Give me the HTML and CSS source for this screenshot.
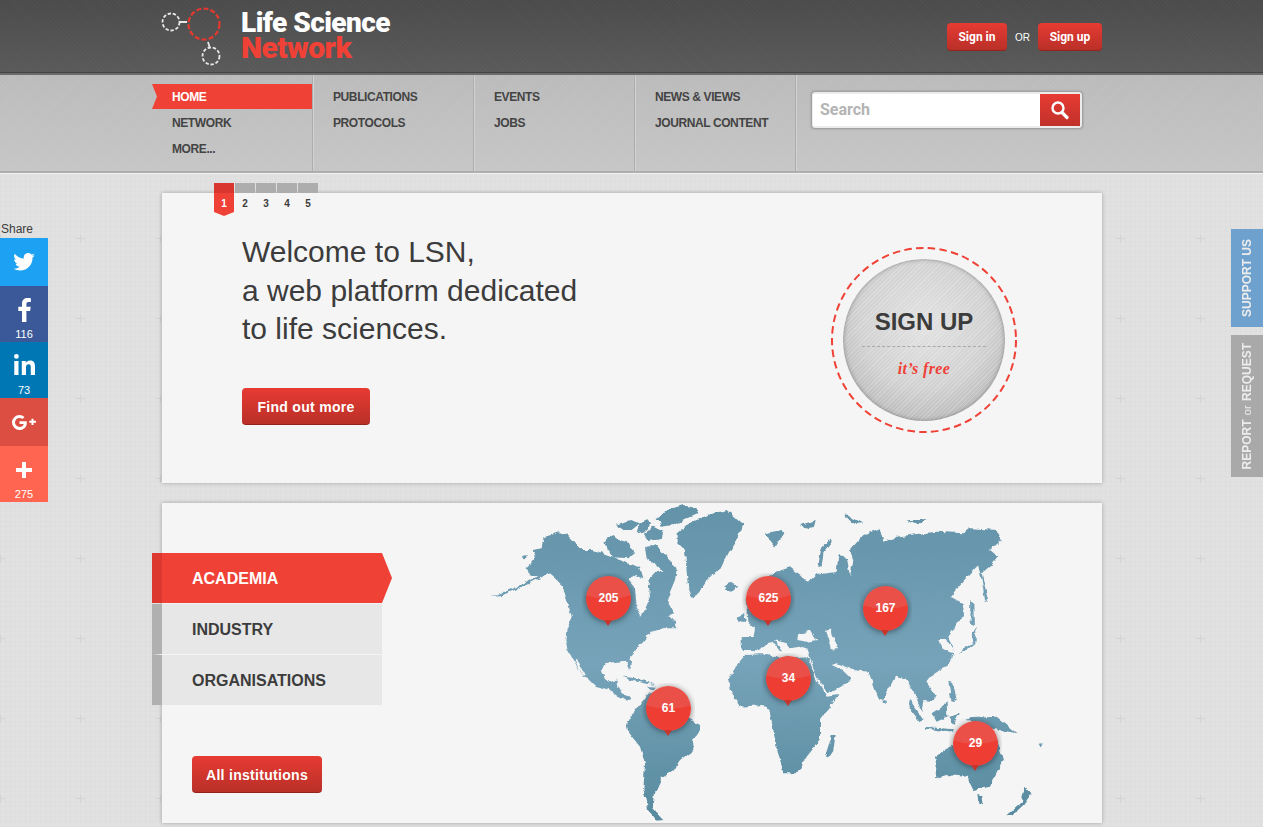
FILE: index.html
```html
<!DOCTYPE html>
<html lang="en">
<head>
    <meta charset="UTF-8">
    <meta name="viewport" content="width=device-width, initial-scale=1.0">
    <title>Life Science Network</title>
    <link rel="stylesheet" href="styles.css">
</head>
<body>

<header class="top-bar">
    <div class="wrap top-inner">
        <a class="logo" href="#">
            <svg class="logo-mark" width="66" height="62" viewBox="0 0 66 62" fill="none" stroke-linecap="butt">
                <circle cx="13" cy="17" r="8.5" stroke="#e8e8e8" stroke-width="1.8" stroke-dasharray="3.4 1.8"/>
                <path d="M22 17h7M50 37l1.500 5" stroke="#e8e8e8" stroke-width="1.800"/>
                <circle cx="46" cy="19" r="15.500" stroke="#e5392f" stroke-width="2.200" stroke-dasharray="5 2.200"/>
                <circle cx="53" cy="51" r="8.500" stroke="#e8e8e8" stroke-width="1.800" stroke-dasharray="3.400 1.800"/>
            </svg>
            <span class="logo-text">
                <span class="logo-life">Life Science</span>
                <span class="logo-network">Network</span>
            </span>
        </a>
        <div class="account">
            <a class="btn btn-small" href="#">Sign in</a>
            <span class="or">OR</span>
            <a class="btn btn-small btn-up" href="#">Sign up</a>
        </div>
    </div>
</header>

<nav class="main-nav">
    <div class="wrap nav-inner">
        <ul class="nav-col">
            <li class="current"><a href="#">Home</a></li>
            <li><a href="#">Network</a></li>
            <li><a href="#">More...</a></li>
        </ul>
        <ul class="nav-col">
            <li><a href="#">Publications</a></li>
            <li><a href="#">Protocols</a></li>
        </ul>
        <ul class="nav-col">
            <li><a href="#">Events</a></li>
            <li><a href="#">Jobs</a></li>
        </ul>
        <ul class="nav-col">
            <li><a href="#">News &amp; Views</a></li>
            <li><a href="#">Journal Content</a></li>
        </ul>
        <form class="search">
            <input class="search-input" type="text" placeholder="Search">
            <button class="search-btn" type="button" aria-label="Search">
                <svg width="20" height="20" viewBox="0 0 20 20" fill="none" stroke="#fff">
                    <circle cx="8" cy="8" r="5.500" stroke-width="2.400"/>
                    <path d="M12 12.500l5 5" stroke-width="3.200" stroke-linecap="round"/>
                </svg>
            </button>
        </form>
    </div>
</nav>

<aside class="share">
    <div class="share-title">Share</div>
    <a class="share-item tw" href="#">
        <svg width="22" height="18" viewBox="0 0 24 20"><path fill="#fff" d="M24 2.400c-.9.400-1.800.700-2.800.800 1-.6 1.800-1.600 2.200-2.700-1 .6-2 1-3.100 1.200A4.900 4.900 0 0 0 11.900 6.200C7.800 6 4.200 4 1.700.9c-1.300 2.200-.7 5.100 1.500 6.600-.8 0-1.600-.2-2.200-.6 0 2.400 1.700 4.400 3.900 4.900-.7.200-1.500.2-2.200.1.600 2 2.400 3.400 4.600 3.400A9.900 9.900 0 0 1 0 17.300 14 14 0 0 0 7.500 19.500c9.100 0 14.300-7.700 14-14.600 1-.7 1.800-1.500 2.500-2.500z"/></svg>
    </a>
    <a class="share-item fb has-count" href="#">
        <svg width="13" height="24" viewBox="0 0 13 24"><path fill="#fff" d="M8.400 24V13h3.700l.6-4.300H8.400V6c0-1.300.4-2.100 2.200-2.100h2.300V.2C12.500.1 11.100 0 9.600 0 6.300 0 4 2 4 5.700v3H.3V13H4v11z"/></svg>
        <span class="count">116</span>
    </a>
    <a class="share-item in has-count" href="#">
        <svg width="21" height="21" viewBox="0 0 21 21"><path fill="#fff" d="M.3 7h4.200v14H.3zM2.400 0a2.400 2.400 0 1 1 0 4.800 2.400 2.400 0 0 1 0-4.800zM7.800 7h4v1.900c.7-1.200 2.200-2.300 4.300-2.300 4 0 4.900 2.600 4.900 6.100V21h-4.200v-7.300c0-1.700-.1-3.500-2.200-3.500s-2.600 1.600-2.600 3.400V21H7.800z"/></svg>
        <span class="count">73</span>
    </a>
    <a class="share-item gp" href="#">
        <svg width="24" height="15" viewBox="0 0 24 15"><path fill="#fff" d="M7.500 6.200v2.700h4.200c-.4 1.800-1.900 3-4.200 3a4.500 4.500 0 0 1 0-9c1.200 0 2.200.4 3 1.100l2-2A7.200 7.200 0 0 0 7.500 0a7.500 7.500 0 0 0 0 15c4.300 0 7.300-3 7.300-7.300 0-.5-.1-1-.2-1.500zM21.500 5.800V3.700h-2v2.100h-2.200v2h2.200V10h2V7.800H24v-2z"/></svg>
    </a>
    <a class="share-item plus has-count" href="#">
        <svg width="16" height="16" viewBox="0 0 16 16"><path fill="#fff" d="M6 0h4v6h6v4h-6v6H6v-6H0V6h6z"/></svg>
        <span class="count">275</span>
    </a>
</aside>

<aside class="side-tabs">
    <a class="side-tab support" href="#"><span>SUPPORT US</span></a>
    <a class="side-tab report" href="#"><span>REPORT <small>or</small> REQUEST</span></a>
</aside>

<main class="wrap page">
    <section class="card hero">
        <ol class="slides">
            <li class="active">1</li>
            <li>2</li>
            <li>3</li>
            <li>4</li>
            <li>5</li>
        </ol>
        <div class="hero-copy">
            <h1>Welcome to LSN,<br>a web platform dedicated<br>to life sciences.</h1>
            <a class="btn btn-big" href="#">Find out more</a>
        </div>
        <a class="signup-badge" href="#">
            <svg class="badge-ring" width="188" height="188" viewBox="0 0 188 188" fill="none">
                <circle cx="94" cy="94" r="92" stroke="#ef4136" stroke-width="2" stroke-dasharray="7.500 4.300"/>
            </svg>
            <span class="badge-disc">
                <span class="badge-title">SIGN UP</span>
                <span class="badge-free">it’s free</span>
            </span>
        </a>
    </section>

    <section class="card network">
        <div class="sectors">
            <ul class="sector-list">
                <li class="active"><a href="#">ACADEMIA</a></li>
                <li><a href="#">INDUSTRY</a></li>
                <li><a href="#">ORGANISATIONS</a></li>
            </ul>
            <a class="btn btn-big" href="#">All institutions</a>
        </div>
        <div class="world">
            <svg class="world-map" width="580" height="320" viewBox="480 503 580 320">
                <defs>
                    <linearGradient id="land" gradientUnits="userSpaceOnUse" x1="0" y1="10" x2="0" y2="970">
                        <stop offset="0" stop-color="#6393a9"/>
                        <stop offset="0.5" stop-color="#76a3b9"/>
                        <stop offset="1" stop-color="#578a9e"/>
                    </linearGradient>
                    <!-- roughens the straight edges into a coastline -->
                    <filter id="coast" x="-2%" y="-2%" width="104%" height="104%">
                        <feTurbulence type="fractalNoise" baseFrequency="0.14" numOctaves="3" seed="4" result="n"/>
                        <feDisplacementMap in="SourceGraphic" in2="n" scale="5" xChannelSelector="R" yChannelSelector="G"/>
                    </filter>
                </defs>
                <g filter="url(#coast)">
                <!-- americas + greenland -->
                <g transform="translate(480 500) scale(.33333)" fill="url(#land)">
                    <polygon points="35,288 70,284 110,268 150,250 185,232 205,218 225,235 245,255 262,300 275,350 260,385 256,420 262,450 282,482 305,525 325,535 345,555 370,565 395,575 415,590 440,602 452,596 445,588 425,580 415,560 412,535 395,545 375,535 365,510 375,490 410,485 440,482 450,510 455,495 450,470 490,425 515,395 545,385 592,385 585,360 555,350 582,340 560,300 585,240 560,215 530,215 505,240 510,290 495,325 480,348 470,320 465,265 445,240 465,225 490,235 480,200 440,190 400,170 370,160 340,150 305,150 262,105 240,97 190,112 185,145 158,150 165,175 140,205 150,225 175,225 135,250 90,270"/>
                    <polygon points="370,125 400,105 420,120 450,130 465,160 445,175 400,172 385,150"/>
                    <polygon points="410,75 450,60 480,70 455,90 430,90"/>
                    <polygon points="490,100 520,80 550,95 545,115 505,120"/>
                    <polygon points="530,55 560,30 610,15 650,25 655,40 610,60 580,75 545,80"/>
                    <polygon points="495,145 530,135 555,165 590,205 585,240 560,225 530,195 500,175"/>
                    <polygon points="470,100 478,75 505,60 510,75 490,95"/>
                    <polygon points="590,100 620,75 680,45 740,30 790,75 770,120 745,160 730,195 680,240 650,285 640,298 625,265 620,215 615,150 590,125"/>
                    <polygon points="730,255 755,248 772,258 760,272 738,270"/>
                    <polygon points="440,675 450,650 490,600 510,575 540,590 600,640 660,675 660,690 640,720 640,750 600,780 580,810 545,835 525,880 520,925 552,960 530,962 505,930 490,870 495,790 480,740 445,695"/>
                    <polygon points="430,530 470,535 525,555 490,550 450,540"/>
                    <polygon points="505,558 530,560 525,568 508,566"/>
                    <polygon points="130,168 140,165 138,178 130,176"/>
                    <polygon points="552,342 575,352 570,365 552,358"/>
                    <polygon points="283,478 292,478 314,522 306,526" fill="#f5f5f5"/>
                </g>
                <!-- eurasia + africa + oceania -->
                <g transform="translate(740 500) scale(.33333)" fill="url(#land)">
                    <polygon points="5,450 5,415 40,410 45,385 25,365 20,300 60,250 110,215 150,202 190,235 205,250 230,225 290,215 295,165 320,170 330,230 340,180 330,150 370,105 420,85 430,125 470,110 550,100 590,95 670,100 690,85 770,90 785,120 750,150 775,170 760,190 725,220 745,305 735,300 725,240 715,195 640,275 632,290 668,310 672,345 640,390 625,410 640,450 620,420 595,420 610,450 640,460 620,500 600,510 570,530 558,545 590,590 575,602 550,600 545,640 530,590 500,540 465,530 430,600 415,595 395,540 385,515 340,510 290,490 275,495 310,510 335,535 320,550 262,580 230,530 212,480 205,450 175,440 150,445 140,430 105,420 130,455 118,452 100,425 80,430 60,450"/>
                    <polygon points="-35,540 -10,495 20,460 60,450 100,470 140,470 205,470 225,530 260,590 295,585 240,660 240,720 200,770 170,820 130,820 110,740 90,640 70,615 0,620 -25,580"/>
                    <polygon points="255,770 275,705 287,705 280,750 265,772"/>
                    <polygon points="585,770 620,745 640,735 680,670 720,660 750,680 770,720 790,780 750,860 700,870 680,830 620,825 585,835 590,800"/>
                    <polygon points="712,885 730,890 725,908 715,905"/>
                    <polygon points="800,945 845,905 855,860 875,880 850,915 815,948"/>
                    <polygon points="232,195 240,150 270,118 274,128 250,160 245,200"/>
                    <polygon points="690,300 700,310 702,375 692,370"/>
                    <polygon points="660,465 672,440 700,430 695,400 710,378 706,430 680,450"/>
                    <polygon points="510,600 550,660 540,665 505,620"/>
                    <polygon points="555,680 640,688 640,695 555,686"/>
                    <polygon points="575,640 620,610 622,650 590,665"/>
                    <polygon points="625,650 660,640 640,672"/>
                    <polygon points="625,545 640,550 650,600 635,605"/>
                    <polygon points="680,655 770,650 830,700 780,690 720,680"/>
                    <polygon points="430,600 440,602 440,612 432,612"/>
                    <polygon points="75,100 125,90 130,100 105,140 90,120"/>
                    <polygon points="180,75 230,60 225,80 190,88"/>
                    <polygon points="315,40 340,55 370,70 345,72 320,55"/>
                    <polygon points="500,60 560,60 530,75"/>
                    <polygon points="-10,350 15,340 20,365 -5,365"/>
                    <polygon points="895,735 912,730 905,742"/>
                    <polygon points="-3,70 10,72 5,85"/>
                    <!-- seas -->
                    <g fill="#f5f5f5">
                        <polygon points="175,402 205,395 235,420 200,425 172,420"/>
                        <polygon points="258,392 272,388 285,420 295,448 275,448 268,420"/>
                        <polygon points="10,458 60,452 100,445 130,455 170,468 205,462 205,470 170,475 130,465 95,462 60,463 20,465"/>
                    </g>
                </g>
                </g>
            </svg>
            <a class="pin pin-205" href="#"><span>205</span></a>
            <a class="pin pin-625" href="#"><span>625</span></a>
            <a class="pin pin-167" href="#"><span>167</span></a>
            <a class="pin pin-34" href="#"><span>34</span></a>
            <a class="pin pin-61" href="#"><span>61</span></a>
            <a class="pin pin-29" href="#"><span>29</span></a>
        </div>
    </section>
</main>

</body>
</html>
```

FILE: styles.css
```css
* {
    margin: 0;
    padding: 0;
    box-sizing: border-box;
}

html, body {
    height: 827px;
    overflow: hidden;
}

body {
    font-family: "Liberation Sans", Arial, sans-serif;
    color: #3c3c3c;
    background-color: #e1e1e1;
    background-image:
        url("data:image/svg+xml,%3Csvg xmlns='http://www.w3.org/2000/svg' width='80' height='80'%3E%3Cpath d='M36.500 40.500h8M40.500 36.500v8' stroke='%23d2d2d2' fill='none'/%3E%3C/svg%3E"),
        repeating-linear-gradient(90deg, rgba(0,0,0,.012) 0 1px, transparent 1px 5px),
        repeating-linear-gradient(0deg, rgba(0,0,0,.012) 0 1px, transparent 1px 5px);
    background-position: 40px 38px, 0 0, 0 0;
}

a {
    text-decoration: none;
    color: inherit;
}

ul, ol {
    list-style: none;
}

.wrap {
    width: 960px;
    margin-left: 152px;
}

/* top bar */
.top-bar {
    height: 75px;
    background-color: #515151;
    background-image:
        repeating-linear-gradient(45deg, rgba(255,255,255,.02) 0 1px, transparent 1px 3px),
        linear-gradient(#4b4b4b, #5a5a5a);
    border-bottom: 2px solid #6b6b6b;
    box-shadow: inset 0 -1px 0 #444;
}

.top-inner {
    display: flex;
    justify-content: space-between;
    height: 73px;
}

.logo {
    display: flex;
    margin-left: 2px;
}

.logo-mark {
    margin: 5px 17px 0 4px;
}

.logo-text {
    display: flex;
    flex-direction: column;
    padding-top: 10px;
    font-family: Roboto, "Liberation Sans", sans-serif;
    font-weight: 900;
    font-size: 28px;
    line-height: 25px;
}

.logo-life {
    color: #fff;
    letter-spacing: -.55px;
}

.logo-network {
    color: #ef4136;
    font-size: 30px;
    letter-spacing: -.55px;
}

.account {
    display: flex;
    align-items: center;
    height: 28px;
    margin: 23px 10px 0 0;
}

.btn {
    display: inline-block;
    color: #fff;
    font-weight: bold;
    text-align: center;
    background: linear-gradient(#e73b33, #b93028);
    border-radius: 4px;
    border-bottom: 1px solid #962319;
}

.btn-small {
    width: 60px;
    height: 28px;
    font-family: Roboto, "Liberation Sans", sans-serif;
    font-size: 12px;
    line-height: 28px;
}

.btn-up {
    width: 64px;
}

.or {
    width: 31px;
    text-align: center;
    font-size: 10px;
    color: #fff;
}

.btn-big {
    height: 37px;
    padding-top: 1px;
    font-size: 14px;
    line-height: 37px;
    letter-spacing: .3px;
}

/* navigation */
.main-nav {
    height: 98px;
    background-color: #c1c1c1;
    background-image:
        repeating-linear-gradient(135deg, rgba(255,255,255,.04) 0 1px, transparent 1px 3px),
        linear-gradient(#bbb, #c6c6c6);
    border-bottom: 2px solid #aeaeae;
    box-shadow: 0 1px 0 #f2f2f2;
}

.nav-inner {
    display: flex;
    height: 96px;
}

.nav-col {
    width: 161px;
    padding-top: 9px;
    border-right: 1px solid #adadad;
    box-shadow: 1px 0 0 #d2d2d2;
}

.nav-col li {
    height: 26px;
    padding-left: 20px;
    font-size: 12px;
    font-weight: bold;
    line-height: 26px;
    letter-spacing: -.4px;
    text-transform: uppercase;
    color: #444;
}

.nav-col li.current {
    height: 25px;
    color: #fff;
    background: #ef4136;
    clip-path: polygon(0 0, 100% 0, 100% 100%, 0 100%, 5px 50%);
    margin-bottom: 1px;
}

.search {
    display: flex;
    width: 272px;
    height: 38px;
    margin: 16px 0 0 15px;
    padding: 2px 2px 2px 1px;
    background: #ececec;
    border: 1px solid #a2a2a2;
    border-radius: 4px;
    box-shadow: 0 0 2px rgba(0,0,0,.25);
}

.search-input {
    flex: 1;
    min-width: 0;
    padding: 0 0 2px 7px;
    border: none;
    outline: none;
    background: #fff;
    font-family: Roboto, "Liberation Sans", sans-serif;
    font-size: 16px;
    font-weight: bold;
}

.search-input::placeholder {
    color: #b4b4b4;
    opacity: 1;
}

.search-btn {
    display: flex;
    align-items: center;
    justify-content: center;
    width: 40px;
    border: none;
    background: linear-gradient(#e73b33, #c0312a);
}

/* left share bar */
.share {
    position: absolute;
    left: 0;
    top: 222px;
    width: 48px;
}

.share-title {
    height: 16px;
    font-size: 12px;
    line-height: 14px;
    padding-left: 1px;
}

.share-item {
    display: flex;
    flex-direction: column;
    align-items: center;
    justify-content: center;
    height: 48px;
    color: #fff;
}

.share-item.has-count {
    height: 56px;
    justify-content: flex-start;
    padding-top: 12px;
    position: relative;
}

.count {
    position: absolute;
    bottom: 1px;
    left: 0;
    right: 0;
    text-align: center;
    font-size: 11px;
    line-height: 13px;
}

.tw { background: #1da1f2; }
.fb { background: #3b5998; }
.in { background: #0077b5; }
.gp { background: #dc4e41; }
.plus { background: #ff6550; }

.plus.has-count { padding-top: 16px; }

/* right side tabs */
.side-tabs {
    position: absolute;
    right: 0;
    top: 229px;
    width: 32px;
}

.side-tab {
    display: flex;
    align-items: center;
    justify-content: center;
    color: #ececec;
    font-size: 12px;
    font-weight: bold;
}

.side-tab span {
    writing-mode: vertical-rl;
    transform: rotate(180deg);
}

.side-tab small {
    font-size: 11px;
    font-weight: normal;
}

.support {
    height: 98px;
    background: #6fa1ce;
    margin-bottom: 8px;
}

.report {
    height: 142px;
    background: #a9a9a9;
    word-spacing: 1px;
}

/* cards */
.page {
    padding: 20px 10px 0;
}

.card {
    position: relative;
    background: #f5f5f5;
    box-shadow: 0 0 4px rgba(0,0,0,.28);
}

.hero {
    display: flex;
    justify-content: space-between;
    height: 290px;
    margin-bottom: 20px;
}

.slides {
    position: absolute;
    top: -10px;
    left: 52px;
    display: flex;
    gap: 1px;
}

.slides li {
    width: 20px;
    height: 33px;
    padding-top: 14px;
    text-align: center;
    font-size: 10px;
    font-weight: bold;
    line-height: 13px;
    background: linear-gradient(#adadad 10px, transparent 10px);
}

.slides li.active {
    color: #fff;
    background: linear-gradient(#d8362e 10px, #ef4136 10px);
    clip-path: polygon(0 0, 100% 0, 100% 29px, 50% 100%, 0 29px);
}

.hero-copy {
    padding: 40px 0 0 80px;
}

h1 {
    font-size: 30px;
    font-weight: normal;
    line-height: 38.500px;
    margin-bottom: 39px;
}

.hero .btn-big {
    width: 128px;
}

.signup-badge {
    position: relative;
    display: flex;
    align-items: center;
    justify-content: center;
    width: 188px;
    height: 188px;
    margin: 53px 84px 0 0;
}

.badge-ring {
    position: absolute;
    left: 0;
    top: 0;
}

.badge-disc {
    display: flex;
    flex-direction: column;
    align-items: center;
    width: 162px;
    height: 162px;
    padding-top: 49px;
    border-radius: 50%;
    background:
        repeating-linear-gradient(135deg, rgba(255,255,255,.2) 0 1px, transparent 1px 3px),
        radial-gradient(circle at 50% 40%, #e2e2e2 0, #d2d2d2 50%, #b8b8b8 82%, #9c9c9c 100%);
    box-shadow: inset 0 0 4px rgba(0,0,0,.35);
}

.badge-title {
    width: 124px;
    padding-bottom: 10px;
    font-size: 24px;
    font-weight: bold;
    line-height: 28px;
    text-align: center;
    color: #3c3c3c;
    border-bottom: 1px dashed #a8a8a8;
}

.badge-free {
    margin-top: 13px;
    font-family: "Liberation Serif", serif;
    font-size: 16px;
    font-weight: bold;
    font-style: italic;
    letter-spacing: .4px;
    color: #ef4136;
}

/* institutions + map */
.network {
    display: flex;
    height: 320px;
}

.sectors {
    flex: none;
    width: 230px;
    margin-left: -10px;
    padding-top: 50px;
}

.sector-list {
    margin-bottom: 51px;
}

.sector-list li {
    height: 51px;
    border-left: 10px solid #b0b0b0;
    background: #e7e7e7;
    border-bottom: 1px solid #f5f5f5;
    font-size: 16px;
    font-weight: bold;
    line-height: 51px;
    padding-left: 30px;
}

.sector-list li:last-child {
    height: 50px;
    border-bottom: none;
}

.sector-list li.active {
    width: 240px;
    height: 50px;
    margin-bottom: 1px;
    border-bottom: none;
    border-left-color: #dc382f;
    background: #ef4136;
    color: #fff;
    clip-path: polygon(0 0, 230px 0, 100% 50%, 230px 100%, 0 100%);
}

.sectors .btn-big {
    width: 130px;
    margin-left: 40px;
}

.world {
    position: relative;
    flex: 1;
}

.world-map {
    position: absolute;
    left: 98px;
    top: 0;
}

.pin {
    position: absolute;
    width: 53px;
    height: 56px;
    overflow: hidden;
}

.pin span {
    position: absolute;
    left: 4px;
    top: 3px;
    width: 45px;
    height: 45px;
    border-radius: 50%;
    background: radial-gradient(ellipse 40px 23px at 50% 0, #ea5048 99%, #ee3d33 100%);
    box-shadow: 0 1px 6px rgba(0,0,0,.5);
    color: #fff;
    font-size: 12px;
    font-weight: bold;
    line-height: 44px;
    text-align: center;
}

.pin::after {
    content: "";
    position: absolute;
    left: 22px;
    top: 47px;
    border-left: 4.500px solid transparent;
    border-right: 4.500px solid transparent;
    border-top: 6px solid #c9342b;
}

/* pin spots: page x - 382 - 26, page y - 503 - 25 */
.pin-205 { left: 200px; top: 70px; }
.pin-625 { left: 360px; top: 70px; }
.pin-167 { left: 477px; top: 80px; }
.pin-34 { left: 380px; top: 150px; }
.pin-61 { left: 260px; top: 180px; }
.pin-29 { left: 567px; top: 215px; }
```
